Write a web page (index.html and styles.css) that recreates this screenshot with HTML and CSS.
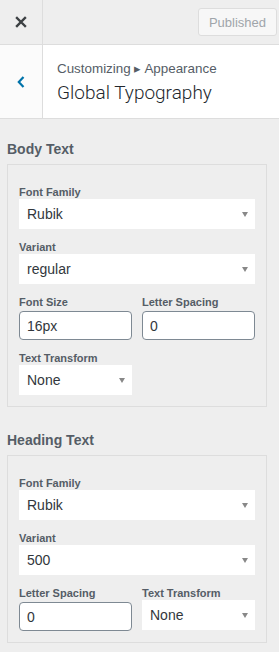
FILE: index.html
```html
<!DOCTYPE html>
<html lang="en">
  <head>
    <meta charset="UTF-8" />
    <meta name="viewport" content="width=device-width, initial-scale=1.0" />
    <title>Global Typography</title>
    <link rel="stylesheet" href="styles.css">
  </head>
  <body>
    <div class="customizer">
      <!-- Thanh trên cùng -->
      <div class="top-bar">
        <div class="close-btn">
          <svg width="12" height="12" viewBox="0 0 12 12">
            <path d="M2 2 L10 10 M10 2 L2 10" stroke="#3c4043" stroke-width="2.4" stroke-linecap="square" />
          </svg>
        </div>
        <button class="publish-btn" disabled>Published</button>
      </div>

      <!-- Tiêu đề mục -->
      <div class="section-head">
        <div class="back-btn">
          <svg width="10" height="14" viewBox="0 0 10 14">
            <path d="M7.5 2 L2.8 7 L7.5 12" fill="none" stroke="#0073aa" stroke-width="2.2" />
          </svg>
        </div>
        <div class="section-title">
          <span class="crumb">Customizing &#9656; Appearance</span>
          <h3>Global Typography</h3>
        </div>
      </div>

      <div class="panel">
        <div class="group">
          <h4>Body Text</h4>
          <div class="group-box">
            <div class="field">
              <label>Font Family</label>
              <div class="select">Rubik</div>
            </div>
            <div class="field">
              <label>Variant</label>
              <div class="select">regular</div>
            </div>
            <div class="row">
              <div class="field">
                <label>Font Size</label>
                <input type="text" value="16px" />
              </div>
              <div class="field">
                <label>Letter Spacing</label>
                <input type="text" value="0" />
              </div>
            </div>
            <div class="row">
              <div class="field">
                <label>Text Transform</label>
                <div class="select">None</div>
              </div>
              <div class="field"></div>
            </div>
          </div>
        </div>

        <div class="group">
          <h4>Heading Text</h4>
          <div class="group-box">
            <div class="field">
              <label>Font Family</label>
              <div class="select">Rubik</div>
            </div>
            <div class="field">
              <label>Variant</label>
              <div class="select">500</div>
            </div>
            <div class="row">
              <div class="field">
                <label>Letter Spacing</label>
                <input type="text" value="0" />
              </div>
              <div class="field">
                <label>Text Transform</label>
                <div class="select">None</div>
              </div>
            </div>
          </div>
        </div>
      </div>
    </div>
  </body>
</html>
```

FILE: styles.css
```css
* {
  margin: 0;
  padding: 0;
  box-sizing: border-box;
}

body {
  font-family: "Liberation Sans", Arial, sans-serif;
  background-color: #eeeeee;
  color: #32373c;
  width: 279px;
}

.top-bar {
  display: flex;
  align-items: center;
  height: 45px;
  background: #eeeeee;
  border-bottom: 1px solid #dddddd;
}

.close-btn {
  width: 43px;
  height: 44px;
  display: flex;
  align-items: center;
  justify-content: center;
  border-right: 1px solid #dddddd;
}

.publish-btn {
  margin-left: auto;
  margin-right: 2px;
  width: 79px;
  height: 28px;
  background: #f7f7f7;
  border: 1px solid #dddddd;
  border-radius: 3px;
  color: #a0a5aa;
  font-family: inherit;
  font-size: 13px;
}

.section-head {
  display: flex;
  height: 74px;
  background: #ffffff;
  border-bottom: 1px solid #dddddd;
}

.back-btn {
  width: 43px;
  display: flex;
  align-items: center;
  justify-content: center;
  border-right: 1px solid #dddddd;
  background: #fbfbfb;
}

.section-title {
  padding: 15px 0 0 14px;
}

.crumb {
  display: block;
  font-size: 13.4px;
  line-height: 18px;
  color: #555d66;
}

.section-title h3 {
  font-family: Roboto, "Liberation Sans", sans-serif;
  font-size: 19px;
  font-weight: 300;
  line-height: 26px;
  margin-top: 2px;
  color: #23282d;
}

.panel {
  padding: 0 12px 0 7px;
  margin-top: -3px;
}

.group {
  padding-top: 23px;
}

.group h4 {
  font-size: 14px;
  line-height: 20px;
  color: #555d66;
  margin-bottom: 5px;
}

.group-box {
  border: 1px solid #dddddd;
  padding: 20px 11px 11px 11px;
}

.field {
  margin-bottom: 11px;
}

.field:last-child {
  margin-bottom: 0;
}

.row {
  display: flex;
  gap: 10px;
  margin-bottom: 11px;
}

.row:last-child {
  margin-bottom: 0;
}

.row .field {
  flex: 1;
  margin-bottom: 0;
}

.field label {
  display: block;
  font-size: 11px;
  font-weight: bold;
  line-height: 14px;
  color: #555d66;
}

.select {
  position: relative;
  height: 30px;
  background: #ffffff;
  padding: 0 8px;
  font-size: 14px;
  line-height: 30px;
  color: #32373c;
}

.select::after {
  content: "";
  position: absolute;
  right: 7px;
  top: 13px;
  border-left: 3.5px solid transparent;
  border-right: 3.5px solid transparent;
  border-top: 5px solid #888888;
}

.field input {
  display: block;
  width: 100%;
  height: 29px;
  margin-top: 2px;
  border: 1px solid #7e8993;
  border-radius: 4px;
  padding: 0 7px;
  font-family: inherit;
  font-size: 14px;
  color: #32373c;
  background: #ffffff;
}
```
